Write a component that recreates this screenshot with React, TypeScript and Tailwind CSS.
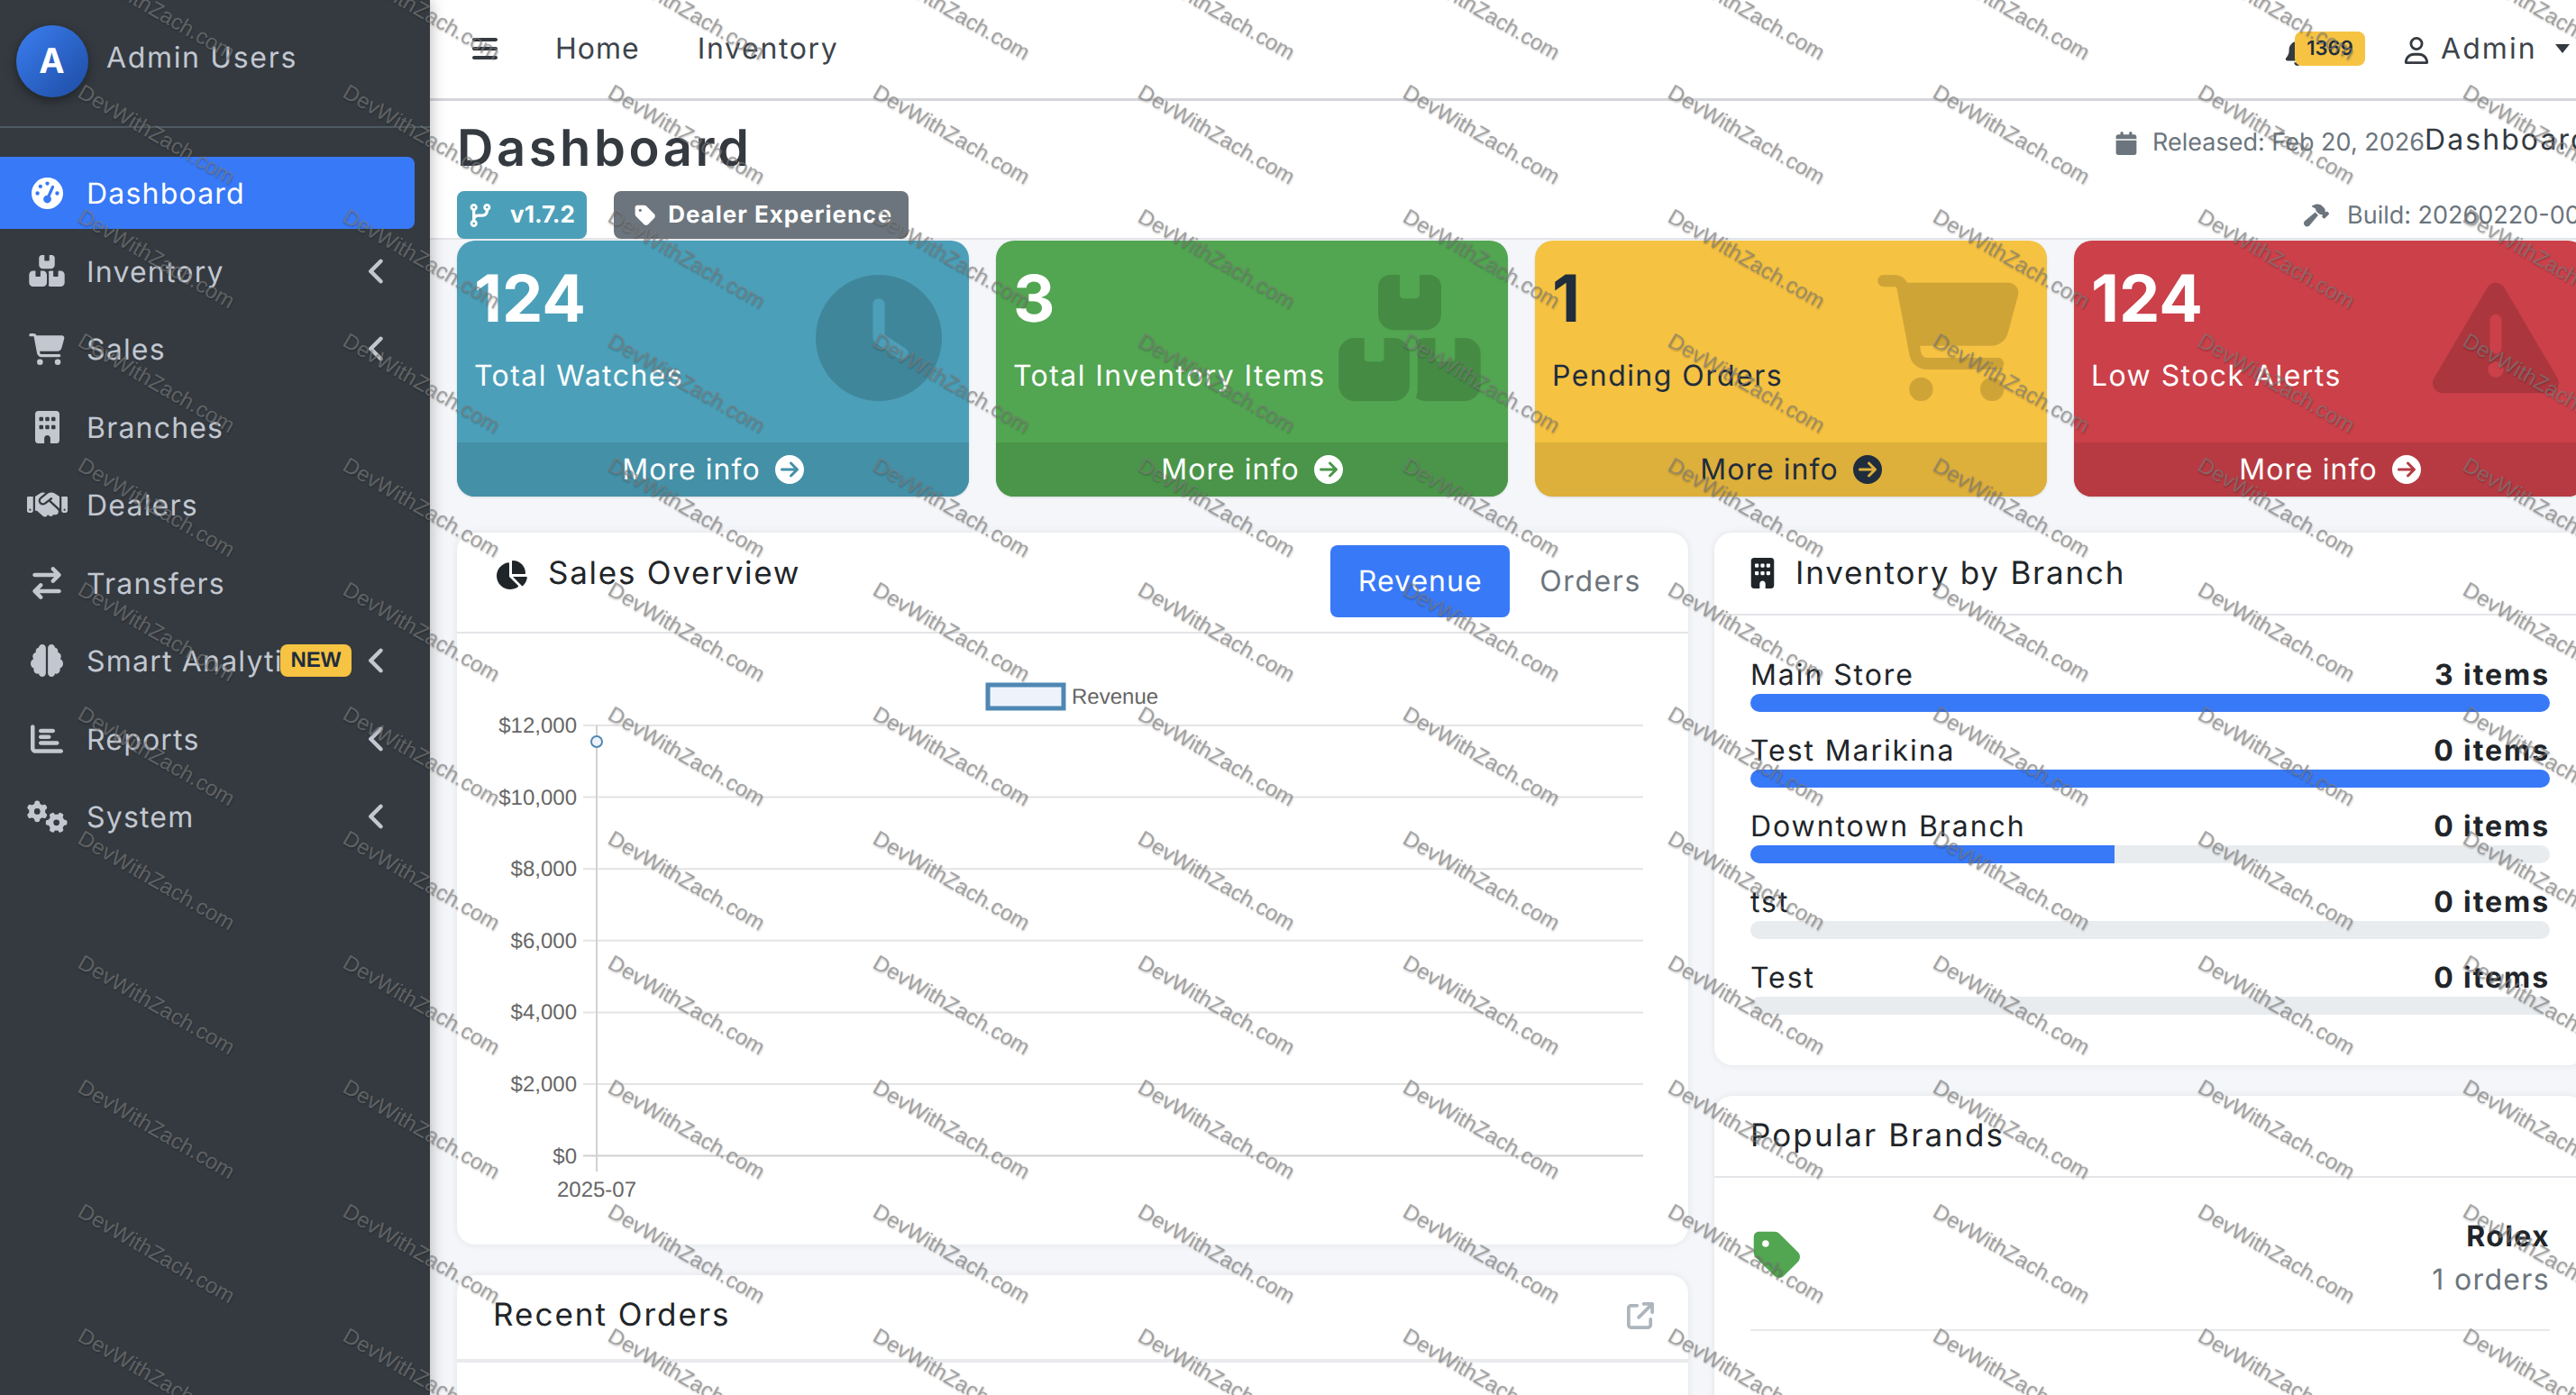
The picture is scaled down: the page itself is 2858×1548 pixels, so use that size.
import React from "react";
import {
  FaAngleLeft,
  FaArrowRightArrowLeft,
  FaArrowUpRightFromSquare,
  FaBars,
  FaBell,
  FaBoxesStacked,
  FaBrain,
  FaBuilding,
  FaCalendar,
  FaCartShopping,
  FaChartBar,
  FaChartPie,
  FaCircleArrowRight,
  FaClock,
  FaCodeBranch,
  FaGaugeHigh,
  FaGears,
  FaHammer,
  FaHandshake,
  FaRegUser,
  FaTag,
  FaTriangleExclamation,
} from "react-icons/fa6";

const navItems = [
  { label: "Dashboard", icon: FaGaugeHigh, size: "w-[35px] h-[35px]", active: true },
  { label: "Inventory", icon: FaBoxesStacked, size: "w-[40px] h-[35px]", arrow: true },
  { label: "Sales", icon: FaCartShopping, size: "w-[40px] h-[35px]", arrow: true },
  { label: "Branches", icon: FaBuilding, size: "w-[27px] h-[36px]" },
  { label: "Dealers", icon: FaHandshake, size: "w-[45px] h-[36px]" },
  { label: "Transfers", icon: FaArrowRightArrowLeft, size: "w-[36px] h-[36px]" },
  { label: "Smart Analytics", icon: FaBrain, size: "w-[36px] h-[36px]", arrow: true, badge: "NEW" },
  { label: "Reports", icon: FaChartBar, size: "w-[36px] h-[36px]", arrow: true },
  { label: "System", icon: FaGears, size: "w-[45px] h-[36px]", arrow: true },
];

const stats = [
  { value: "124", label: "Total Watches", icon: FaClock, size: "w-[140px]", bg: "bg-[#4c9fb8]", foot: "bg-[#4490a7]", text: "text-white" },
  { value: "3", label: "Total Inventory Items", icon: FaBoxesStacked, size: "w-[158px]", bg: "bg-[#52a551]", foot: "bg-[#4a9549]", text: "text-white" },
  { value: "1", label: "Pending Orders", icon: FaCartShopping, size: "w-[158px]", bg: "bg-[#f5c242]", foot: "bg-[#ddaf3b]", text: "text-[#1f2d3d]" },
  { value: "124", label: "Low Stock Alerts", icon: FaTriangleExclamation, size: "w-[140px]", bg: "bg-[#cb4049]", foot: "bg-[#b73a42]", text: "text-white" },
];

const branches = [
  { name: "Main Store", items: "3 items", pct: 100 },
  { name: "Test Marikina", items: "0 items", pct: 100 },
  { name: "Downtown Branch", items: "0 items", pct: 45.5 },
  { name: "tst", items: "0 items", pct: 0 },
  { name: "Test", items: "0 items", pct: 0 },
];

const ticks = ["$12,000", "$10,000", "$8,000", "$6,000", "$4,000", "$2,000", "$0"];

function Watermark() {
  const cells = Array.from({ length: 132 });
  return (
    <div
      aria-hidden
      className="absolute left-[-268px] top-[-57px] z-50 grid grid-cols-[repeat(11,294px)] auto-rows-[138px] pointer-events-none"
    >
      {cells.map((_, i) => (
        <div key={i} className="flex items-center justify-center">
          <span className="rotate-[30deg] whitespace-nowrap text-[24px] tracking-normal text-[rgba(125,125,125,0.65)] [text-shadow:1px_1px_2px_rgba(0,0,0,0.22)] font-['Liberation_Sans',sans-serif]">
            DevWithZach.com
          </span>
        </div>
      ))}
    </div>
  );
}

function Sidebar() {
  return (
    <aside className="w-[477px] shrink-0 bg-[#343a40] text-[#c2c7d0] shadow-[0_0_16px_rgba(0,0,0,0.3)] z-10">
      <div className="h-[142px] border-b-2 border-[#4f5962] flex items-start pl-[18px] pt-[28px] gap-5">
        <div className="w-20 h-20 rounded-full bg-gradient-to-br from-[#3b7ff2] to-[#1e4ca3] shadow-[0_4px_12px_rgba(0,0,0,0.4)] flex items-center justify-center text-white text-[38px] font-bold">
          A
        </div>
        <span className="text-[32px] mt-4 leading-10 tracking-[0.052em]">Admin Users</span>
      </div>
      <nav className="mt-8 flex flex-col gap-[6.5px] tracking-[0.075em]">
        {navItems.map((item) => (
          <div
            key={item.label}
            className={
              item.active
                ? "w-[460px] h-20 flex items-center rounded-r-lg bg-[#3879f7] text-white"
                : "w-[460px] h-20 flex items-center"
            }
          >
            <span className="w-[96px] flex justify-center pl-[8px] shrink-0">
              <item.icon className={item.size} />
            </span>
            {item.badge ? (
              <span className="w-[215px] overflow-hidden whitespace-nowrap text-[32px] pt-0.5">{item.label}</span>
            ) : (
              <span className="text-[32px] pt-0.5">{item.label}</span>
            )}
            {item.badge && (
              <span className="bg-[#f6c343] text-[#1f2d3d] rounded-lg h-9 w-[79px] flex items-center justify-center text-[24px] tracking-normal font-bold font-['Liberation_Sans',sans-serif]">
                {item.badge}
              </span>
            )}
            {item.arrow && <FaAngleLeft className="ml-auto mr-[24px] text-[36px] text-[#c2c7d0]" />}
          </div>
        ))}
      </nav>
    </aside>
  );
}

function TopBar() {
  return (
    <header className="h-[112px] bg-white border-b-[3px] border-[#d5d6da] flex items-start pt-[30px] pl-[47px] text-[32px] text-[#3d444b] relative">
      <FaBars className="w-[28px] h-[32px] mt-[8px] text-[#343a40]" />
      <span className="ml-[64px]">Home</span>
      <span className="ml-[64px] tracking-[0.051em]">Inventory</span>
      <div className="absolute left-[2057px] top-[30px] flex items-center">
        <FaBell className="text-[30px] text-[#343a40] mt-2" />
        <span className="ml-[-18px] w-[78px] h-[38px] rounded-lg bg-[#f6c343] text-[#1f2d3d] text-[22px] tracking-normal font-semibold flex items-center justify-center">
          1369
        </span>
        <FaRegUser className="ml-[42px] text-[30px] mt-1 text-[#343a40]" />
        <span className="ml-3 tracking-[0.065em]">Admin</span>
        <span className="ml-[20px] border-x-[8px] border-t-[10px] border-x-transparent border-t-[#343a40]" />
      </div>
    </header>
  );
}

function PageHeader() {
  return (
    <section className="h-[154px] bg-white border-b-2 border-[#e3e4e8] flex pl-[30px]">
      <div className="flex-1">
        <h1 className="mt-[20px] text-[56px] leading-[64px] font-semibold tracking-[0.064em] text-[#343a40]">Dashboard</h1>
        <div className="mt-[16px] flex gap-[30px]">
          <span className="w-[144px] h-[53px] rounded-lg bg-[#4c9fb8] text-white text-[26px] tracking-normal font-bold flex items-center justify-center gap-5">
            <FaCodeBranch className="text-[26px]" />
            v1.7.2
          </span>
          <span className="w-[327px] h-[53px] pl-1 rounded-lg bg-[#6c757d] text-white text-[26px] tracking-[0.038em] font-bold flex items-center justify-center gap-3">
            <FaTag className="text-[26px]" />
            Dealer Experience
          </span>
        </div>
      </div>
      <div className="w-[531px] shrink-0 whitespace-nowrap text-[#6c757d] text-[27px] tracking-normal">
        <div className="mt-[26px] flex items-center">
          <FaCalendar className="text-[26px] mr-[16px]" />
          <span>Released: Feb 20, 2026</span>
          <span className="text-[32px] tracking-[0.065em] text-[#343a40] mt-[-7px]">Dashboard</span>
        </div>
        <div className="mt-[40px] pl-[210px] flex items-center">
          <FaHammer className="text-[28px] mr-[20px]" />
          <span>Build: 20260220-001</span>
        </div>
      </div>
    </section>
  );
}

function StatCard({ stat }: { stat: (typeof stats)[number] }) {
  return (
    <div className={`${stat.bg} ${stat.text} h-[284px] rounded-[20px] overflow-hidden relative flex flex-col shadow-sm`}>
      <div className="flex-1 pl-[19px] pt-[25px]">
        <div className="text-[72px] leading-[80px] font-bold tracking-normal">{stat.value}</div>
        <div className="mt-[25px] text-[32px] leading-10 tracking-[0.045em]">{stat.label}</div>
      </div>
      <stat.icon className={`absolute right-[30px] top-[38px] h-[140px] ${stat.size} text-black opacity-15`} />
      <div className={`${stat.foot} h-[60px] flex items-center justify-center gap-4 text-[32px]`}>
        More info
        <FaCircleArrowRight className="text-[32px]" />
      </div>
    </div>
  );
}

function SalesChart() {
  return (
    <svg width="1366" height="676" className="block tracking-normal font-['Liberation_Sans',sans-serif]">
      <rect x="589" y="57" width="84" height="26" fill="#eef3fb" stroke="#4f87b3" strokeWidth="5" />
      <text x="682" y="78" fontSize="24" fill="#666">Revenue</text>
      {ticks.map((t, i) => {
        const y = 102 + i * 79.6;
        return (
          <g key={t}>
            <line x1="140" x2="1316" y1={y} y2={y} stroke={i === 6 ? "#cfcfcf" : "#e4e4e4"} strokeWidth="2" />
            <text x="133" y={y + 8} textAnchor="end" fontSize="24" fill="#666">{t}</text>
          </g>
        );
      })}
      <line x1="155" x2="155" y1="102" y2="597" stroke="#d2d2d2" strokeWidth="2" />
      <circle cx="155" cy="120" r="6" fill="#eef3fb" stroke="#4f87b3" strokeWidth="2" />
      <text x="155" y="625" textAnchor="middle" fontSize="24" fill="#666">2025-07</text>
    </svg>
  );
}

function App() {
  return (
    <div className="relative w-[2858px] h-[1548px] overflow-hidden flex bg-[#f4f6f9] tracking-[0.065em] [text-rendering:geometricPrecision] font-['Inter',sans-serif]">
      <Sidebar />
      <main className="w-[2400px] shrink-0">
        <TopBar />
        <PageHeader />
        <div className="pl-[30px] pt-px">
          <div className="grid grid-cols-[repeat(4,568px)] gap-[30px]">
            {stats.map((s) => (
              <StatCard key={s.label} stat={s} />
            ))}
          </div>
          <div className="mt-10 flex gap-[29px] items-start">
            <div className="w-[1366px] flex flex-col gap-[34px]">
              <div className="h-[790px] bg-white rounded-[20px] shadow-[0_0_8px_rgba(0,0,0,0.08)] overflow-hidden">
                <div className="h-[112px] border-b-2 border-[#e4e5e8] flex items-start">
                  <FaChartPie className="ml-[42px] mt-[29px] text-[36px] text-[#1f2529]" />
                  <span className="ml-[23px] mt-[23px] text-[35px] leading-[44px] tracking-[0.05em] text-[#1f2529]">Sales Overview</span>
                  <span className="ml-auto mt-[14px] w-[199px] h-20 rounded-lg bg-[#3879f7] text-white text-[32px] flex items-center justify-center">
                    Revenue
                  </span>
                  <span className="ml-[33px] mr-[52px] mt-[14px] h-20 text-[32px] tracking-[0.05em] text-[#6c757d] flex items-center">Orders</span>
                </div>
                <SalesChart />
              </div>
              <div className="h-[200px] bg-white rounded-[20px] shadow-[0_0_8px_rgba(0,0,0,0.08)]">
                <div className="h-[97px] pb-1 border-b-4 border-[#e9eaed] flex items-center pl-10 pr-[38px] text-[35px] tracking-[0.057em] text-[#1f2529]">
                  Recent Orders
                  <FaArrowUpRightFromSquare className="ml-auto text-[30px] text-[#adb5bd]" />
                </div>
              </div>
            </div>
            <div className="w-[967px] flex flex-col gap-[34px]">
              <div className="h-[591px] bg-white rounded-[20px] shadow-[0_0_8px_rgba(0,0,0,0.08)]">
                <div className="h-[92px] border-b-2 border-[#e4e5e8] flex items-center pl-10 text-[35px] tracking-[0.051em] text-[#1f2529]">
                  <FaBuilding className="h-[34px] mr-[23px] w-[27px]" />
                  Inventory by Branch
                </div>
                <div className="px-10 pt-[45px] flex flex-col gap-[22px]">
                  {branches.map((b) => (
                    <div key={b.name}>
                      <div className="flex justify-between text-[32px] leading-[42px] tracking-[0.06em] text-[#212529]">
                        <span>{b.name}</span>
                        <span className="font-bold">{b.items}</span>
                      </div>
                      <div className="h-5 rounded-[10px] bg-[#e9ecef] overflow-hidden">
                        <div className="h-full bg-[#3879f7]" style={{ width: `${b.pct}%` }} />
                      </div>
                    </div>
                  ))}
                </div>
              </div>
              <div className="h-[400px] bg-white rounded-[20px] shadow-[0_0_8px_rgba(0,0,0,0.08)]">
                <div className="h-[91px] border-b-2 border-[#e4e5e8] flex items-center pl-10 text-[35px] tracking-[0.06em] text-[#1f2529]">
                  Popular Brands
                </div>
                <div className="mx-10 h-[170px] border-b-2 border-[#e8e9ec] flex items-center justify-between">
                  <FaTag className="text-[60px] text-[#52a551] mt-[3px]" />
                  <div className="text-right text-[32px] leading-[48px] pt-[10px] tracking-[0.042em]">
                    <div className="font-bold text-[#212529]">Rolex</div>
                    <div className="text-[#6c757d]">1 orders</div>
                  </div>
                </div>
              </div>
            </div>
          </div>
        </div>
      </main>
      <Watermark />
    </div>
  );
}

export default App;
